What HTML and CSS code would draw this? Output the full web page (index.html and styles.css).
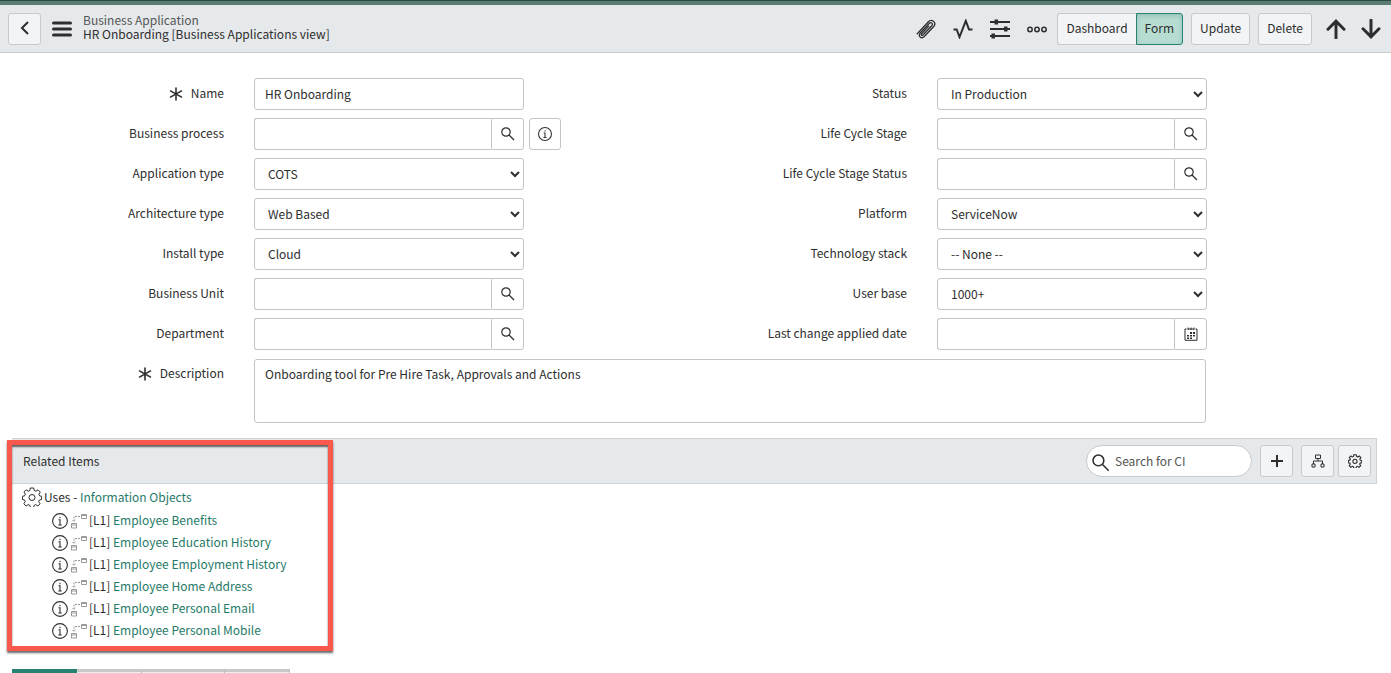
FILE: index.html
```html
<!DOCTYPE html>
<html lang="en">
<head>
  <meta charset="UTF-8">
  <meta name="viewport" content="width=device-width, initial-scale=1.0">
  <title>HR Onboarding | Business Application</title>
  <link rel="stylesheet" href="styles.css">
</head>
<body>
  <!-- shared icons -->
  <svg class="sprite" aria-hidden="true">
    <symbol id="search" viewBox="0 0 14 14">
      <circle cx="5" cy="5" r="4.200"/><path d="M8 8l5 5"/>
    </symbol>
    <symbol id="info" viewBox="0 0 16 16">
      <circle cx="8" cy="8" r="7.400"/><path d="M6.500 6.800H8V12M6.300 12h3.400M8 3.800v1.400"/>
    </symbol>
    <symbol id="required" viewBox="0 0 14 14">
      <path d="M7 .5v13M1 3.600l12 6.800M13 3.600L1 10.400"/>
    </symbol>
    <symbol id="relation" viewBox="0 0 17 16">
      <path d="M10.500 1.500h5v4h-5zM.500 10.500h5v4.500h-5zM.500 12h5M10.500 2.500h5"/>
      <path d="M9 3.500H3V8M1.500 7L3 8.500 4.500 7" stroke-dasharray="2 1"/>
    </symbol>
    <symbol id="gear" viewBox="0 0 20 20">
      <path d="M8.300 1h3.400l.5 2.500 1.700.8 2.200-1.500 2.200 2.300-1.400 2.200.7 1.600 2 .4v3.200l-2.200.5-.7 1.700 1.400 2.100-2.200 2.200-2.200-1.400-1.600.7-.5 2.300H8.400l-.5-2.300-1.700-.7-2.100 1.400-2.300-2.200 1.400-2.200-.6-1.600-2.200-.5V9.300l2.200-.5.7-1.700-1.400-2.100 2.200-2.200 2.100 1.400 1.700-.7z"/>
      <circle cx="10" cy="10.500" r="3"/>
    </symbol>
  </svg>

  <div class="topline"></div>
  <header class="header">
    <button class="btn back" aria-label="Back">
      <svg width="10" height="16" viewBox="0 0 10 16"><path d="M8 2L2 8l6 6"/></svg>
    </button>
    <button class="icon-btn menu" aria-label="Menu">
      <svg width="20" height="16" viewBox="0 0 20 16"><path d="M1.500 2h17M1.500 8h17M1.500 14h17"/></svg>
    </button>
    <div class="title">
      <div class="title-type">Business Application</div>
      <div>HR Onboarding [Business Applications view]</div>
    </div>
    <div class="tools">
      <button class="icon-btn clip" aria-label="Attachments">
        <svg width="20" height="20" viewBox="0 0 20 20"><path d="M.8 15.300L12.400 2.800c3.200-3.400 8.400.6 5.500 4.500L8.300 17.500c-3 2.900-6.600-.4-4-3.600L13.400 4.300c1.800-1.600 4 .3 2.300 2.400L7 16c-1.200 1-2.300-.1-1.400-1.300l7.400-7.800"/></svg>
      </button>
      <button class="icon-btn pulse" aria-label="Activity">
        <svg width="20" height="20" viewBox="0 0 20 20"><path d="M.5 10.500h3.200L6.500 18 12.800 1.800 16 10.500h3.500"/></svg>
      </button>
      <button class="icon-btn sliders" aria-label="Personalize form">
        <svg width="20" height="20" viewBox="0 0 20 20"><path d="M0 3h20M0 10h20M0 17h20"/><path class="solid" d="M4.500.5H8v5H4.500zM14 7.500h3.500v5H14zM1.500 14.500H5v5H1.500z"/></svg>
      </button>
      <button class="icon-btn" aria-label="More options">
        <svg width="20" height="20" viewBox="0 0 20 20"><circle cx="3" cy="10.500" r="2.200"/><circle cx="10" cy="10.500" r="2.200"/><circle cx="17" cy="10.500" r="2.200"/></svg>
      </button>
      <div class="actions">
        <div class="btn-group">
          <button class="btn">Dashboard</button>
          <button class="btn active">Form</button>
        </div>
        <button class="btn">Update</button>
        <button class="btn">Delete</button>
      </div>
      <button class="icon-btn arrow" aria-label="Previous record">
        <svg width="20" height="20" viewBox="0 0 20 20"><path d="M10 19V2.500M2 10.200l8-8 8 8"/></svg>
      </button>
      <button class="icon-btn arrow" aria-label="Next record">
        <svg width="20" height="20" viewBox="0 0 20 20"><path d="M10 1v16.500M2 9.800l8 8 8-8"/></svg>
      </button>
    </div>
  </header>

  <form class="form">
    <div class="columns">
      <div class="column">
        <div class="field">
          <label for="name"><svg class="required"><use href="#required"/></svg>Name</label>
          <input type="text" id="name" value="HR Onboarding">
        </div>
        <div class="field">
          <label for="process">Business process</label>
          <div class="lookup">
            <input type="text" id="process">
            <button type="button" aria-label="Look up business process"><svg class="search"><use href="#search"/></svg></button>
          </div>
          <button type="button" class="info-btn" aria-label="Preview business process"><svg class="info-small"><use href="#info"/></svg></button>
        </div>
        <div class="field">
          <label for="app-type">Application type</label>
          <select id="app-type"><option>COTS</option></select>
        </div>
        <div class="field">
          <label for="arch-type">Architecture type</label>
          <select id="arch-type"><option>Web Based</option></select>
        </div>
        <div class="field">
          <label for="install-type">Install type</label>
          <select id="install-type"><option>Cloud</option></select>
        </div>
        <div class="field">
          <label for="unit">Business Unit</label>
          <div class="lookup">
            <input type="text" id="unit">
            <button type="button" aria-label="Look up business unit"><svg class="search"><use href="#search"/></svg></button>
          </div>
        </div>
        <div class="field">
          <label for="department">Department</label>
          <div class="lookup">
            <input type="text" id="department">
            <button type="button" aria-label="Look up department"><svg class="search"><use href="#search"/></svg></button>
          </div>
        </div>
      </div>

      <div class="column">
        <div class="field">
          <label for="status">Status</label>
          <select id="status"><option>In Production</option></select>
        </div>
        <div class="field">
          <label for="stage">Life Cycle Stage</label>
          <div class="lookup">
            <input type="text" id="stage">
            <button type="button" aria-label="Look up stage"><svg class="search"><use href="#search"/></svg></button>
          </div>
        </div>
        <div class="field">
          <label for="stage-status">Life Cycle Stage Status</label>
          <div class="lookup">
            <input type="text" id="stage-status">
            <button type="button" aria-label="Look up stage status"><svg class="search"><use href="#search"/></svg></button>
          </div>
        </div>
        <div class="field">
          <label for="platform">Platform</label>
          <select id="platform"><option>ServiceNow</option></select>
        </div>
        <div class="field">
          <label for="stack">Technology stack</label>
          <select id="stack"><option>-- None --</option></select>
        </div>
        <div class="field">
          <label for="user-base">User base</label>
          <select id="user-base"><option>1000+</option></select>
        </div>
        <div class="field">
          <label for="changed">Last change applied date</label>
          <div class="lookup">
            <input type="text" id="changed">
            <button type="button" aria-label="Select date">
              <svg class="calendar" width="14" height="14" viewBox="0 0 14 14"><path d="M2.500 2H1v11.300h12V2h-1.500M4 .5V3M7 .5V3M10 .5V3M4 2h6"/><path class="solid" d="M6 5h2v2H6zM9 5h2v2H9zM3 8h2v1.500H3zM6 8h2v1.500H6zM9 8h2v1.500H9zM3 10.500h2V12H3zM6 10.500h2V12H6z"/></svg>
            </button>
          </div>
        </div>
      </div>
    </div>
    <div class="field wide">
      <label for="description"><svg class="required"><use href="#required"/></svg>Description</label>
      <textarea id="description">Onboarding tool for Pre Hire Task, Approvals and Actions</textarea>
    </div>
  </form>

  <section class="related">
    <div class="related-bar">
      <h2>Related Items</h2>
      <div class="related-tools">
        <div class="ci-search">
          <svg class="search"><use href="#search"/></svg>
          <input type="text" placeholder="Search for CI" aria-label="Search for CI">
        </div>
        <button class="btn square add" aria-label="Add"><svg width="14" height="14" viewBox="0 0 14 14"><path d="M7 1v12M1 7h12"/></svg></button>
        <div class="pair">
          <button class="btn square" aria-label="Dependency view"><svg width="14" height="14" viewBox="0 0 14 14"><path d="M4.500 1h5v3.500h-5zM7 4.500V7M2.500 10V7h9v3M1 10h3v3H1zM10 10h3v3h-3z"/></svg></button>
          <button class="btn square" aria-label="Settings"><svg width="14" height="14" viewBox="0 0 20 20" class="gear-bold"><use href="#gear"/></svg></button>
        </div>
      </div>
    </div>
    <div class="uses"><svg class="gear"><use href="#gear"/></svg><span>Uses - <a href="#">Information Objects</a></span></div>
    <ul class="items">
      <li><svg class="info"><use href="#info"/></svg><svg class="relation"><use href="#relation"/></svg><span>[L1] <a href="#">Employee Benefits</a></span></li>
      <li><svg class="info"><use href="#info"/></svg><svg class="relation"><use href="#relation"/></svg><span>[L1] <a href="#">Employee Education History</a></span></li>
      <li><svg class="info"><use href="#info"/></svg><svg class="relation"><use href="#relation"/></svg><span>[L1] <a href="#">Employee Employment History</a></span></li>
      <li><svg class="info"><use href="#info"/></svg><svg class="relation"><use href="#relation"/></svg><span>[L1] <a href="#">Employee Home Address</a></span></li>
      <li><svg class="info"><use href="#info"/></svg><svg class="relation"><use href="#relation"/></svg><span>[L1] <a href="#">Employee Personal Email</a></span></li>
      <li><svg class="info"><use href="#info"/></svg><svg class="relation"><use href="#relation"/></svg><span>[L1] <a href="#">Employee Personal Mobile</a></span></li>
    </ul>
    <div class="highlight"></div>
  </section>

  <div class="tabs">
    <div class="tab selected"></div>
    <div class="tab"></div>
    <div class="tab tab-wide"></div>
    <div class="tab"></div>
  </div>
</body>
</html>
```
FILE: styles.css
```css
* {
  box-sizing: border-box;
}
body {
  margin: 0;
  background: #fff;
  color: #2e2e2e;
  font-family: "Noto Sans CJK SC", "Noto Sans", sans-serif;
  font-size: 12px;
  line-height: 16px;
}
button, input, select, textarea {
  font: inherit;
  color: inherit;
  margin: 0;
}
button {
  cursor: pointer;
}
svg {
  display: block;
  flex: none;
  fill: none;
  stroke: #2e2e2e;
}
.solid {
  fill: #2e2e2e;
  stroke: none;
}
.sprite {
  position: absolute;
  width: 0;
  height: 0;
}
a {
  color: #1f7a68;
  text-decoration: none;
}

/* Header */
.topline {
  height: 5px;
  background: #5a7d73;
  border-top: 1px solid #2b4a41;
}
.header {
  display: flex;
  align-items: center;
  height: 48px;
  padding: 0 10px 0 8px;
  background: #e6e9eb;
  border-bottom: 1px solid #c8cacc;
}
.btn {
  height: 32px;
  padding: 0 8px 2px;
  background: #f3f4f6;
  border: 1px solid #c8cacc;
  border-radius: 3px;
}
.back {
  display: flex;
  align-items: center;
  justify-content: center;
  width: 33px;
}
.back svg {
  stroke-width: 2;
}
.icon-btn {
  padding: 0;
  background: none;
  border: none;
}
.menu {
  margin: 0 11px;
}
.menu svg {
  stroke-width: 3;
  stroke-linecap: round;
}
.title {
  padding-bottom: 3px;
  line-height: 14px;
}
.title-type {
  color: #555;
}
.tools {
  display: flex;
  align-items: center;
  gap: 17px;
  margin-left: auto;
}
.tools .icon-btn svg {
  stroke-width: 1.5;
}
.tools .clip svg {
  stroke-width: 1.3;
}
.tools .pulse svg,
.tools .sliders svg {
  stroke-width: 2;
}
.tools .arrow svg {
  stroke-width: 3;
  stroke-linecap: round;
}
.actions {
  display: flex;
  gap: 8px;
  margin: 0 -3px 0 -7px;
}
.arrow + .arrow {
  margin-left: -2px;
}
.btn-group {
  display: flex;
}
.btn-group .btn:first-child {
  border-right: none;
  border-radius: 3px 0 0 3px;
}
.btn-group .active {
  background: #b7ddd3;
  border-color: #278272;
  border-radius: 0 3px 3px 0;
  box-shadow: inset 0 2px 5px rgba(0, 80, 60, 0.2);
}

/* Form */
.form {
  padding: 25px 25px 15px 0;
}
.columns {
  display: grid;
  grid-template-columns: 1fr 1fr;
}
.column {
  display: grid;
  gap: 8px;
}
.field {
  display: grid;
  grid-template-columns: 254fr 270fr 159fr;
  align-items: center;
}
.field label {
  display: flex;
  align-items: center;
  justify-content: flex-end;
  gap: 8px;
  padding: 0 30px 2px 0;
}
.required {
  width: 14px;
  height: 14px;
  margin-top: 2px;
  stroke-width: 1.6;
}
.field input, .field select, .field textarea {
  width: 100%;
  min-width: 0;
  height: 32px;
  padding: 0 10px 2px;
  background: #fff;
  border: 1px solid #c3c5c7;
  border-radius: 3px;
}
.field select {
  padding-left: 9px;
}
.lookup {
  display: flex;
}
.field .lookup input {
  flex: 1;
  border-right: none;
  border-radius: 3px 0 0 3px;
}
.lookup button, .info-btn {
  display: flex;
  align-items: center;
  justify-content: center;
  width: 33px;
  height: 32px;
  padding: 0;
  background: #fff;
  border: 1px solid #c3c5c7;
  border-radius: 0 3px 3px 0;
}
.info-btn {
  width: 32px;
  margin-left: 5px;
  border-radius: 3px;
}
.search, .info-small {
  width: 14px;
  height: 14px;
  stroke-width: 1.2;
}
.wide {
  grid-template-columns: 254fr 952fr 160fr;
  align-items: start;
  margin-top: 9px;
}
.wide label {
  height: 30px;
}
.field textarea {
  display: block;
  height: 64px;
  padding: 6px 10px;
  resize: none;
}

/* Related items */
.related {
  position: relative;
  margin: 0 14px 0 12px;
}
.related-bar {
  display: flex;
  align-items: center;
  justify-content: space-between;
  height: 46px;
  padding: 0 5px 0 11px;
  background: #e6e9eb;
  border: 1px solid #d0d3d5;
  border-left: none;
}
.related-bar h2 {
  margin: 0;
  font-size: 12px;
  font-weight: normal;
}
.related-tools {
  display: flex;
  gap: 8px;
}
.pair {
  display: flex;
  gap: 4px;
}
.ci-search {
  display: flex;
  align-items: center;
  gap: 5px;
  width: 166px;
  height: 32px;
  padding: 0 12px 0 5px;
  background: #fff;
  border: 1px solid #c8cacc;
  border-radius: 16px;
}
.ci-search .search {
  width: 18px;
  height: 18px;
  margin-top: 4px;
}
.ci-search input {
  width: 100%;
  min-width: 0;
  padding: 0;
  background: none;
  border: none;
}
.ci-search input::placeholder {
  color: #555;
}
.square {
  display: flex;
  align-items: center;
  justify-content: center;
  width: 33px;
  padding: 0;
}
.add svg {
  stroke-width: 2;
}
.gear-bold {
  stroke-width: 1.6;
}
.uses {
  display: flex;
  align-items: center;
  gap: 2px;
  height: 26px;
  padding-left: 10px;
}
.gear {
  width: 20px;
  height: 20px;
}
.items {
  margin: 0;
  padding: 0 0 0 40px;
  list-style: none;
}
.items li {
  display: flex;
  align-items: center;
  height: 22px;
}
.items span {
  padding-bottom: 2px;
}
.info {
  width: 16px;
  height: 16px;
  stroke-width: 1.1;
}
.relation {
  width: 17px;
  height: 16px;
  margin: 0 1px 0 3px;
  stroke: #999;
}
.highlight {
  position: absolute;
  top: 2px;
  left: -5px;
  width: 326px;
  height: 211px;
  border: 5px solid #f9594d;
  box-shadow: 0 2px 2px rgba(0, 0, 0, 0.6), inset 0 2px 2px rgba(0, 0, 0, 0.6);
  pointer-events: none;
}

/* Tabs */
.tabs {
  display: flex;
  margin: 27px 12px 0;
}
.tab {
  width: 65px;
  height: 4px;
  background: #eceeef;
  border-top: 3px solid #c9c9c9;
  border-right: 1px solid #bbb;
}
.tab-wide {
  width: 83px;
}
.selected {
  background: #278272;
  border-color: #278272;
}
```
